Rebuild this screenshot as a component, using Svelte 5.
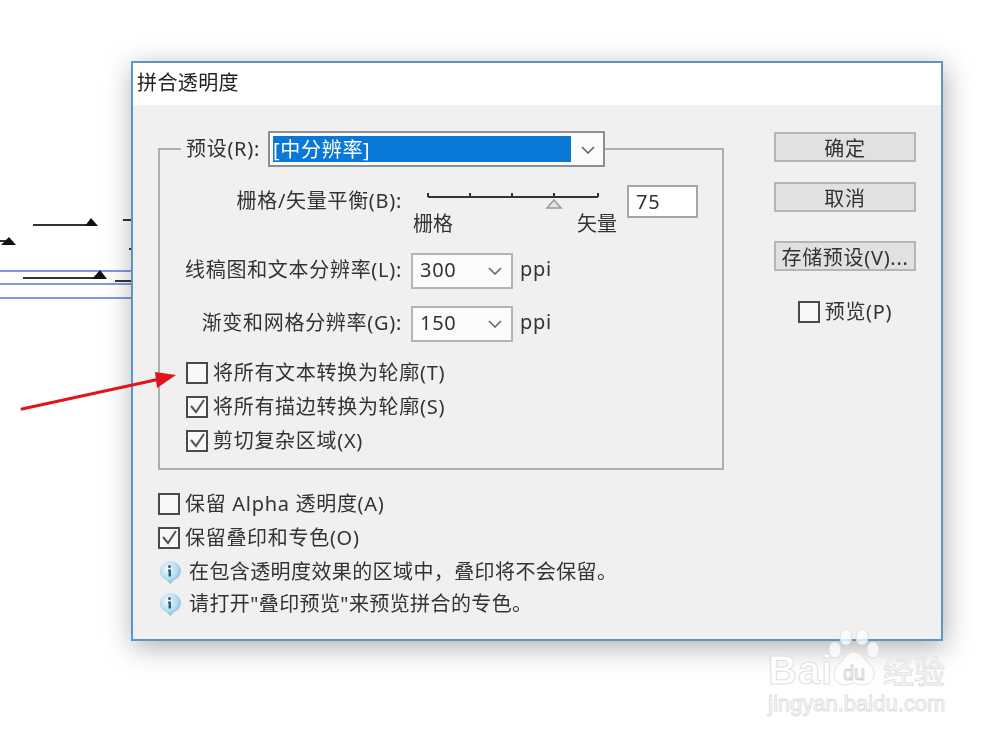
<script lang="ts">
  const sliderTicks = [2, 44, 86, 128, 172]

  const groupChecks = [
    { label: "将所有文本转换为轮廓(T)", on: false },
    { label: "将所有描边转换为轮廓(S)", on: true },
    { label: "剪切复杂区域(X)", on: true },
  ]

  const infoLines = [
    "在包含透明度效果的区域中，叠印将不会保留。",
    "请打开\"叠印预览\"来预览拼合的专色。",
  ]
</script>

{#snippet check(on: boolean)}
  <span class="box">
    {#if on}
      <svg width="17" height="17" viewBox="0 0 17 17">
        <path d="M2 8l5 6L15 2" fill="none" stroke="#555" stroke-width="2" />
      </svg>
    {/if}
  </span>
{/snippet}

{#snippet chevron()}
  <svg class="chev" width="14" height="8" viewBox="0 0 14 8">
    <path d="M1 1l6 6 6-6" fill="none" stroke="#666" stroke-width="1.6" />
  </svg>
{/snippet}

{#snippet infoIcon()}
  <svg width="24" height="24" viewBox="0 0 24 24">
    <path d="M12 1a11 10 0 0 1 4 19.300L12 24l-3-3.600A11 10 0 0 1 12 1z" fill="url(#bubble)" />
    <circle cx="11.500" cy="6.500" r="1.500" fill="#2a5f86" />
    <path d="M10 9.500h3v7h-2.500v-5.500H10z" fill="#2a5f86" />
  </svg>
{/snippet}

<div class="page">
  <svg class="artwork" width="131" height="310" viewBox="0 0 131 310">
    <g stroke="#7f97e6" stroke-width="2">
      <path d="M0 271h131M0 284h131M0 298h131" />
    </g>
    <g stroke="#333" stroke-width="2" fill="#111">
      <path d="M33 225h62M23 278h80M115 281h16M123 220h8" />
      <path d="M-4 241h12M129 249h2" />
      <path stroke="none" d="M85 226l6-8 7 8zM1 245l8-8 7 8zM92 279l8-9 7 9z" />
    </g>
  </svg>

  <section class="dialog">
    <svg class="defs" width="0" height="0">
      <defs>
        <radialGradient id="bubble" cx="0.4" cy="0.35" r="0.7">
          <stop offset="0" stop-color="#f4fafd" />
          <stop offset="0.6" stop-color="#b5dcee" />
          <stop offset="1" stop-color="#7fb8d6" />
        </radialGradient>
      </defs>
    </svg>

    <header class="title">拼合透明度</header>

    <div class="body">
      <div class="main">
        <fieldset class="group">
          <legend>
            <span>预设(R):</span>
            <span class="preset">
              <span class="preset-value">[中分辨率]</span>
              {@render chevron()}
            </span>
          </legend>

          <div class="row slider-row">
            <span class="row-label">栅格/矢量平衡(B):</span>
            <div class="slider">
              <svg width="180" height="25" viewBox="0 0 180 25">
                <path d="M2 12h170" stroke="#333" stroke-width="2" />
                {#each sliderTicks as x}
                  <path d="M{x} 8v4" stroke="#333" stroke-width="2" />
                {/each}
                <path d="M128 15l7 8h-14z" fill="#e4e4e4" stroke="#999" stroke-width="1.500" />
              </svg>
              <div class="slider-ends">
                <span>栅格</span>
                <span>矢量</span>
              </div>
            </div>
            <span class="field">75</span>
          </div>

          <div class="row combo-row">
            <span class="row-label">线稿图和文本分辨率(L):</span>
            <span class="combo">300 {@render chevron()}</span>
            <span class="unit">ppi</span>
          </div>

          <div class="row combo-row second">
            <span class="row-label">渐变和网格分辨率(G):</span>
            <span class="combo">150 {@render chevron()}</span>
            <span class="unit">ppi</span>
          </div>

          <div class="group-checks">
            {#each groupChecks as c}
              <div class="check-row">
                {@render check(c.on)}
                <span>{c.label}</span>
              </div>
            {/each}
          </div>
        </fieldset>

        <div class="options">
          <div class="check-row">
            {@render check(false)}
            <span>保留 Alpha 透明度(A)</span>
          </div>
          <div class="check-row">
            {@render check(true)}
            <span>保留叠印和专色(O)</span>
          </div>
          <div class="info-lines">
            {#each infoLines as line}
              <div class="info">
                {@render infoIcon()}
                <span>{line}</span>
              </div>
            {/each}
          </div>
        </div>
      </div>

      <aside class="actions">
        <button>确定</button>
        <button>取消</button>
        <button class="save">存储预设(V)...</button>
        <div class="check-row preview">
          {@render check(false)}
          <span>预览(P)</span>
        </div>
      </aside>
    </div>
  </section>

  <svg class="arrow" width="160" height="45" viewBox="0 0 160 45">
    <path d="M2 38L140 8" stroke="#e0141a" stroke-width="3" stroke-linecap="round" />
    <path d="M156 4L135 1l2 16z" fill="#e0141a" />
  </svg>

  <div class="watermark">
    <div class="brand">
      <span class="bai">Bai</span>
      <svg class="paw" width="52" height="64" viewBox="0 0 52 64">
        <g fill="#fff" fill-opacity="0.75" stroke="#e0e0e0">
          <ellipse cx="18" cy="9" rx="6" ry="8" />
          <ellipse cx="34" cy="9" rx="6" ry="8" />
          <ellipse cx="7" cy="22" rx="6" ry="8" />
          <ellipse cx="45" cy="22" rx="6" ry="8" />
          <path d="M26 24c8 0 10 8 16 13 8 7 4 20-8 20-4 0-5-2-8-2s-4 2-8 2C6 57 2 44 10 37c6-5 8-13 16-13z" />
        </g>
      </svg>
      <span class="du">du</span>
      <span class="jy">经验</span>
    </div>
    <div class="site">jingyan.baidu.com</div>
  </div>
</div>

<style>
  :global(body) {
    margin: 0;
    background: #fff;
  }

  .page {
    position: relative;
    width: 1000px;
    height: 735px;
    padding: 61px 0 0 131px;
    box-sizing: border-box;
    overflow: hidden;
    font-family: "Noto Sans", "Noto Sans CJK SC", sans-serif;
    font-size: 20px;
    letter-spacing: 0.7px;
    color: #333;
  }

  .artwork {
    position: absolute;
    left: 0;
    top: 0;
  }

  .dialog {
    position: relative;
    box-sizing: border-box;
    width: 812px;
    height: 580px;
    background: #f0f0f0;
    border: 2px solid #5b97c6;
    box-shadow: 2px 6px 26px rgba(0, 0, 0, 0.32);
    filter: blur(0.35px);
  }

  .defs {
    position: absolute;
  }

  .title {
    height: 42px;
    line-height: 40px;
    padding-left: 4px;
    background: #fff;
    color: #222;
    letter-spacing: 0.4px;
  }

  .body {
    display: flex;
    gap: 50px;
    padding: 26px 0 0 25px;
  }

  .main {
    width: 566px;
  }

  .group {
    margin: 0;
    padding: 0 0 18px;
    border: 2px solid #aeaeae;
    min-width: 0;
    box-sizing: border-box;
    height: 339px;
  }

  legend {
    display: flex;
    align-items: center;
    justify-content: space-between;
    box-sizing: border-box;
    width: 424px;
    height: 36px;
    margin-left: 21px;
    padding: 0 0 0 5px;
    line-height: 38px;
  }

  .preset {
    display: flex;
    align-items: center;
    justify-content: space-between;
    box-sizing: border-box;
    width: 337px;
    height: 36px;
    padding: 3px 8px 3px 3px;
    background: #fbfbfb;
    border: 2px solid #8f8f8f;
  }

  .preset-value {
    box-sizing: border-box;
    width: 298px;
    height: 26px;
    line-height: 28px;
    background: #0a78d7;
    color: #fff;
  }

  .row {
    display: grid;
    grid-template-columns: 242px auto auto;
    justify-content: start;
    column-gap: 9px;
  }

  .row-label {
    text-align: right;
    white-space: nowrap;
    padding-bottom: 2px;
  }

  .slider-row {
    margin-top: 18px;
    height: 68px;
    line-height: 32px;
  }

  .slider {
    width: 204px;
    margin-left: 2px;
  }

  .slider svg {
    display: block;
    margin-left: 13px;
  }

  .slider-ends {
    display: flex;
    justify-content: space-between;
    line-height: 28px;
    letter-spacing: 0;
  }

  .field {
    box-sizing: border-box;
    width: 71px;
    height: 33px;
    line-height: 29px;
    padding-left: 7px;
    margin-left: 1px;
    background: #fff;
    border: 2px solid #a6a6a6;
  }

  .combo-row {
    align-items: center;
    height: 36px;
    line-height: 32px;
  }

  .combo-row.second {
    margin-top: 17px;
  }

  .combo {
    display: flex;
    align-items: center;
    justify-content: space-between;
    box-sizing: border-box;
    width: 102px;
    height: 36px;
    padding: 0 9px 2px 7px;
    background: #fbfbfb;
    border: 2px solid #b4b4b4;
  }

  .unit {
    margin-left: -2px;
    padding-bottom: 4px;
  }

  .chev {
    flex: none;
    margin-top: 2px;
  }

  .group-checks {
    display: flex;
    flex-direction: column;
    gap: 13px;
    margin: 20px 0 0 26px;
  }

  .check-row {
    display: flex;
    align-items: center;
    gap: 5px;
    height: 21px;
    line-height: 23px;
    white-space: nowrap;
  }

  .box {
    box-sizing: border-box;
    flex: none;
    display: flex;
    align-items: center;
    justify-content: center;
    width: 22px;
    height: 22px;
    background: #f8f8f8;
    border: 2px solid #4a4a4a;
  }

  .options {
    display: flex;
    flex-direction: column;
    gap: 13px;
    margin-top: 23px;
  }

  .info-lines {
    display: flex;
    flex-direction: column;
    gap: 8px;
    margin-top: -1px;
  }

  .info {
    display: flex;
    align-items: center;
    gap: 7px;
    height: 24px;
    line-height: 24px;
    letter-spacing: 0.4px;
    white-space: nowrap;
  }

  .actions {
    display: flex;
    flex-direction: column;
    width: 142px;
    padding-top: 1px;
  }

  button {
    box-sizing: border-box;
    height: 30px;
    padding: 0;
    margin-bottom: 20px;
    font: inherit;
    letter-spacing: 0.7px;
    line-height: 30px;
    color: inherit;
    background: #e1e1e1;
    border: 2px solid #b5b5b5;
    white-space: nowrap;
  }

  button.save {
    margin: 9px 0 0;
  }

  .preview {
    justify-content: center;
    margin-top: 30px;
  }

  .arrow {
    position: absolute;
    left: 20px;
    top: 371px;
  }

  .watermark {
    position: absolute;
    left: 768px;
    top: 628px;
    width: 180px;
    color: #fff;
    letter-spacing: 0;
    -webkit-text-stroke: 1px #e0e0e0;
    font-family: "Liberation Sans", sans-serif;
  }

  .brand {
    position: relative;
    height: 62px;
  }

  .bai,
  .du,
  .jy {
    position: absolute;
    white-space: nowrap;
  }

  .bai {
    left: 0;
    top: 20px;
    font-size: 40px;
    line-height: 44px;
    font-weight: 700;
    letter-spacing: 1px;
  }

  .paw {
    position: absolute;
    left: 60px;
    top: 0;
  }

  .du {
    left: 75px;
    top: 34px;
    font-size: 20px;
    line-height: 22px;
    -webkit-text-stroke: 1px #d4d4d4;
  }

  .jy {
    left: 115px;
    top: 24px;
    font-family: "Noto Sans CJK SC", sans-serif;
    font-size: 31px;
    line-height: 36px;
  }

  .site {
    font-size: 22px;
    line-height: 28px;
    white-space: nowrap;
  }
</style>
